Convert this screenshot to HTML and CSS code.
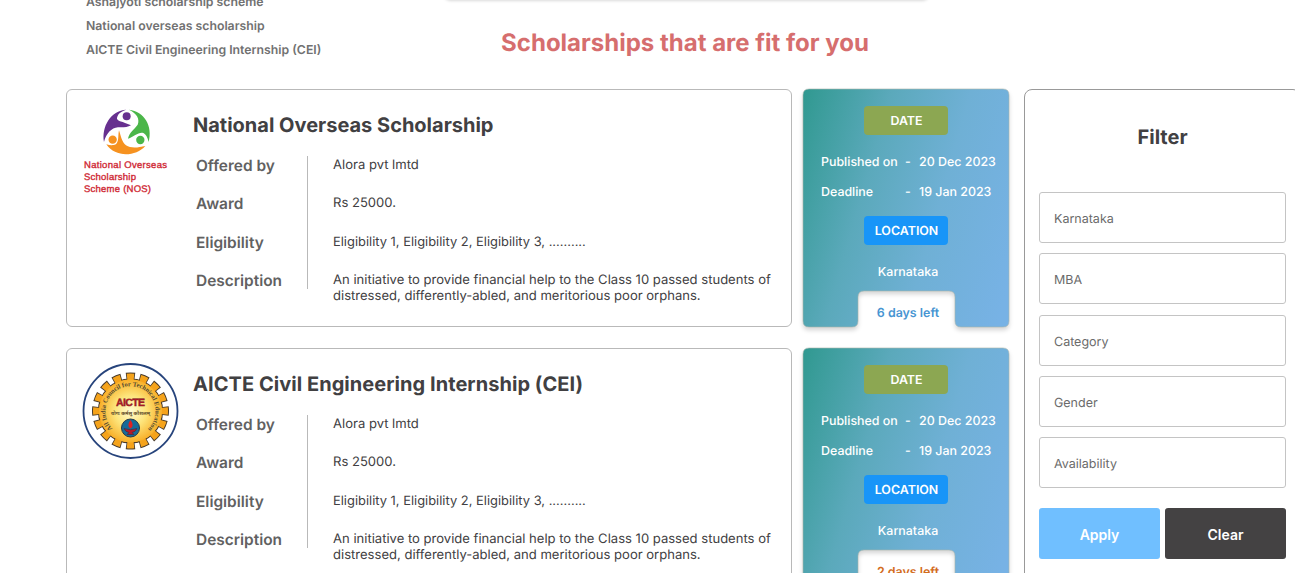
FILE: index.html
```html
<!DOCTYPE html>
<html lang="en">
<head>
<meta charset="utf-8">
<title>Scholarships</title>
<link rel="stylesheet" href="styles.css">
</head>
<body>
<svg class="defs" width="0" height="0">
  <defs>
    <linearGradient id="sea" gradientUnits="userSpaceOnUse" x1="-4" y1="0" x2="242" y2="70">
      <stop offset="0" stop-color="#2e988e"/><stop offset=".35" stop-color="#5ba9bb"/><stop offset=".65" stop-color="#6fb0d5"/><stop offset="1" stop-color="#77b2e5"/>
    </linearGradient>
    <radialGradient id="gold"><stop offset="0" stop-color="#fffbd2"/><stop offset=".5" stop-color="#fde47a"/><stop offset="1" stop-color="#f8b02a"/></radialGradient>
    <path id="notched" d="M6 0H200Q206 0 206 6V232Q206 238 200 238H158Q152 238 152 232V208Q152 202 146 202H61Q55 202 55 208V232Q55 238 49 238H6Q0 238 0 232V6Q0 0 6 0Z"/>
  </defs>
</svg>
<header class="top">
  <ul class="suggestions">
    <li>Ashajyoti scholarship scheme</li>
    <li>National overseas scholarship</li>
    <li>AICTE Civil Engineering Internship (CEI)</li>
  </ul>
  <div class="center">
    <div class="banner"></div>
    <h1>Scholarships that are fit for you</h1>
  </div>
</header>
<main class="content">
  <section class="list">
    <div class="row">
      <article class="card">
        <svg class="logo" width="110" height="110" viewBox="0 0 110 110">
          <g transform="translate(-23 -18) scale(.3333)">
            <path d="M132 174C124 128 152 80 199 77C180 82 171 94 171 104C173 112 186 111 213 124C202 131 188 130 174 130C154 132 139 148 132 174Z" fill="#67308f"/>
            <path d="M207 77C253 82 279 126 266 174C262 157 256 148 247 146C233 145 221 158 204 164C208 145 222 137 233 122C240 106 231 88 207 77Z" fill="#4bb649"/>
            <path d="M139 181C151 185 162 184 168 181C178 170 173 157 177 139C183 158 186 175 198 184C213 194 234 191 256 186C227 218 167 222 139 181Z" fill="#f69220"/>
            <circle cx="200" cy="97" r="12" fill="#67308f"/><circle cx="241" cy="168" r="12.500" fill="#4bb649"/><circle cx="158" cy="167" r="12.500" fill="#f69220"/>
          </g>
          <g class="nos-text"><text x="1" y="66" textLength="83">National Overseas</text><text x="1" y="78" textLength="52">Scholarship</text><text x="1" y="89.500" textLength="67">Scheme (NOS)</text></g>
        </svg>
        <div class="details">
          <h2>National Overseas Scholarship</h2>
          <dl>
            <dt>Offered by</dt><dd>Alora pvt lmtd</dd>
            <dt>Award</dt><dd>Rs 25000.</dd>
            <dt>Eligibility</dt><dd class="eligibility">Eligibility 1, Eligibility 2, Eligibility 3, ..........</dd>
            <dt>Description</dt><dd>An initiative to provide financial help to the Class 10 passed students of distressed, differently-abled, and meritorious poor orphans.</dd>
          </dl>
        </div>
      </article>
      <aside class="status">
        <svg class="shape" width="206" height="238"><use href="#notched" fill="url(#sea)" stroke="#a9b5ac" stroke-width=".6"/></svg>
        <div class="tag date">DATE</div>
        <div class="dates"><span>Published on</span><span>-</span><span>20 Dec 2023</span><span>Deadline</span><span>-</span><span>19 Jan 2023</span></div>
        <div class="tag location">LOCATION</div>
        <div class="place">Karnataka</div>
        <div class="left">6 days left</div>
      </aside>
    </div>
    <div class="row">
      <article class="card">
        <svg class="logo" width="110" height="110" viewBox="0 0 110 110">
          <circle cx="47.500" cy="50" r="47" fill="#fff" stroke="#27447c" stroke-width="1.800"/>
          <g transform="translate(47.500 50)">
            <circle r="34.500" fill="none" stroke="#493b2b" stroke-width="8" pathLength="320" stroke-dasharray="12.800 7.200" stroke-dashoffset="6.400"/>
            <circle r="32" fill="#f5a31b" stroke="#493b2b" stroke-width="1.200"/>
            <circle r="34" fill="none" stroke="#f5a31b" stroke-width="7" pathLength="320" stroke-dasharray="10.400 9.600" stroke-dashoffset="5.200"/>
            <circle r="31.500" fill="url(#gold)"/>
            <path id="ring" d="M-18 17.500A25 25 0 1 1 18 17.500" fill="none"/>
            <text class="ring-text"><textPath href="#ring" textLength="117">All India Council for Technical Education</textPath></text>
            <text class="aicte" x="0" y="-5" text-anchor="middle" textLength="29">AICTE</text>
            <text class="motto" x="0" y="4" text-anchor="middle">योगः कर्मसु कौशलम्</text>
            <circle cy="17" r="9" fill="#176b99" stroke="#263849"/>
            <path d="M0 9C-3.500 14 -2 16 0 17.500C2 16 3.500 14 0 9Z" fill="#e32021"/><path d="M-6.500 17.500Q0 20 6.500 17.500Q5 21 1.500 21.500L3.500 23.500H-3.500L-1.500 21.500Q-5 21-6.500 17.500Z" fill="#b5192a" stroke="#392433" stroke-width=".5"/>
          </g>
        </svg>
        <div class="details">
          <h2>AICTE Civil Engineering Internship (CEI)</h2>
          <dl>
            <dt>Offered by</dt><dd>Alora pvt lmtd</dd>
            <dt>Award</dt><dd>Rs 25000.</dd>
            <dt>Eligibility</dt><dd class="eligibility">Eligibility 1, Eligibility 2, Eligibility 3, ..........</dd>
            <dt>Description</dt><dd>An initiative to provide financial help to the Class 10 passed students of distressed, differently-abled, and meritorious poor orphans.</dd>
          </dl>
        </div>
      </article>
      <aside class="status urgent">
        <svg class="shape" width="206" height="238"><use href="#notched" fill="url(#sea)" stroke="#a9b5ac" stroke-width=".6"/></svg>
        <div class="tag date">DATE</div>
        <div class="dates"><span>Published on</span><span>-</span><span>20 Dec 2023</span><span>Deadline</span><span>-</span><span>19 Jan 2023</span></div>
        <div class="tag location">LOCATION</div>
        <div class="place">Karnataka</div>
        <div class="left">2 days left</div>
      </aside>
    </div>
  </section>
  <aside class="filter">
    <h2>Filter</h2>
    <div class="fields">
      <div class="field">Karnataka</div><div class="field">MBA</div><div class="field">Category</div><div class="field">Gender</div><div class="field">Availability</div>
    </div>
    <div class="actions"><button class="apply">Apply</button><button class="clear">Clear</button></div>
  </aside>
</main>
</body>
</html>
```
FILE: styles.css
```css
* { box-sizing: border-box; }
body { margin: 0; width: 1295px; height: 573px; overflow: hidden; background: #fff; font-family: Inter, sans-serif; color: #414042; text-rendering: geometricPrecision; }
h1, h2, ul, dl, dd { margin: 0; padding: 0; }
.defs { position: absolute; }
.top { display: flex; height: 89px; }
.suggestions { list-style: none; width: 443px; padding-left: 86px; margin-top: -10px; font-size: 12.270px; line-height: 24px; font-weight: 600; color: #717171; }
.center { width: 487px; }
.banner { height: 20px; margin-top: -20px; border-radius: 8px; box-shadow: 0 1px 3px rgba(0,0,0,.15); }
h1 { margin-top: 28px; text-align: center; font-size: 24px; line-height: 30px; font-weight: 700; color: #d66e6e; white-space: nowrap; padding-right: 3px; }
.content { display: flex; gap: 15px; padding-left: 66px; }
.list { display: flex; flex-direction: column; gap: 21px; flex: none; }
.row { display: flex; gap: 11px; height: 238px; }
.card { width: 726px; border: 1px solid #b9b9b9; border-radius: 6px; display: flex; padding: 12px 0 0 16px; }
.logo { flex: none; overflow: visible; }
.nos-text { font: 9.5px "Liberation Sans", Arial, sans-serif; fill: #cf2733; stroke: #cf2733; stroke-width: .35; }
.ring-text { font: bold 6.5px "Liberation Serif", serif; fill: #514830; }
.aicte { font: bold 10.5px "Liberation Sans", Arial, sans-serif; fill: #b5182a; stroke: #7c1a1c; stroke-width: .4; }
.motto { font: bold 5px "Noto Sans", sans-serif; fill: #68532e; }
.details { flex: none; }
.details h2 { font-size: 20px; line-height: 24px; font-weight: 700; margin-top: 11px; }
.row + .row h2 { letter-spacing: .05px; }
dl { display: grid; grid-template-columns: 112px 475px; grid-template-rows: 38.300px 38.500px 38.200px 18px; margin: 19px 0 0 3px; position: relative; }
dl::after { content: ""; position: absolute; left: 111px; top: 0; height: 133px; border-left: 1px solid #b9b9b9; }
dt { font-size: 15.450px; line-height: 20px; font-weight: 600; color: #616161; }
dd { padding: 1px 0 0 25px; font-size: 13.050px; line-height: 16px; }
.eligibility { padding-top: 2px; font-size: 12.900px; }
.status { position: relative; isolation: isolate; width: 206px; height: 238px; padding-top: 17px; color: #fff; display: flex; flex-direction: column; align-items: center; font-size: 12.430px; }
.shape { position: absolute; inset: 0; z-index: -1; overflow: visible; filter: drop-shadow(0 3px 2px rgba(0,0,0,.16)); }
.tag { width: 84px; height: 29px; border-radius: 4px; line-height: 29px; padding-left: 1px; text-align: center; font-weight: 600; }
.date { background: #8ca752; }
.location { background: #1895f8; margin-top: 9px; }
.dates { width: 100%; display: grid; grid-template-columns: 84px 14px 1fr; grid-auto-rows: 30px; line-height: 30px; padding-left: 18px; margin-top: 12px; font-weight: 500; white-space: nowrap; }
.place { margin: 17px 0 0 4px; line-height: 20px; font-weight: 500; }
.left { margin: 21px 0 0 4px; line-height: 20px; font-weight: 600; color: #4795d2; }
.urgent .left { color: #d36c1c; }
.filter { width: 277px; height: 600px; flex: none; border: 1px solid #999; border-radius: 8px; padding: 33px 14px; }
.filter h2 { font-size: 20px; line-height: 28px; font-weight: 700; text-align: center; }
.fields { display: flex; flex-direction: column; gap: 10.250px; margin-top: 41px; }
.field { height: 51px; border: 1px solid #c4c4c4; border-radius: 3px; padding-left: 14px; font-size: 12.500px; line-height: 53px; color: #6b6b6b; }
.actions { display: flex; gap: 5px; margin-top: 20px; }
button { flex: 1; height: 51px; border: 0; border-radius: 3px; padding: 2px 0 0; color: #fff; font: 600 14px Inter, sans-serif; }
.apply { background: #70bfff; }
.clear { background: #444243; }
```
